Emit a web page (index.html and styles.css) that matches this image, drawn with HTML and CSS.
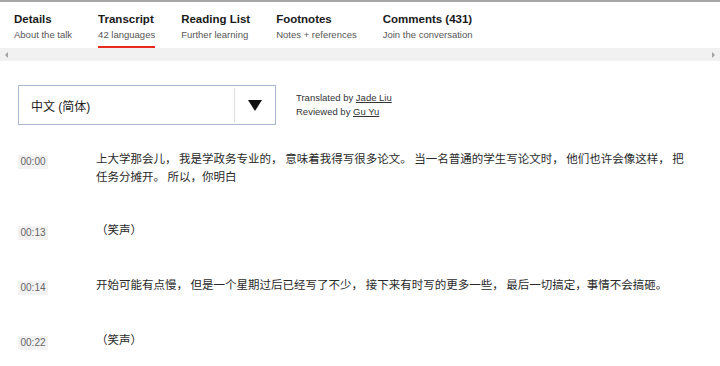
FILE: index.html
```html
<!DOCTYPE html>
<html lang="zh-CN">
<head>
    <meta charset="UTF-8">
    <meta name="viewport" content="width=device-width, initial-scale=1.0">
    <title>Transcript</title>
    <link rel="stylesheet" href="styles.css">
</head>
<body>
    <nav class="tabs">
        <div class="tab-list">
            <a class="tab" href="#details">
                <span class="tab-title">Details</span>
                <span class="tab-sub">About the talk</span>
            </a>
            <a class="tab active" href="#transcript">
                <span class="tab-title">Transcript</span>
                <span class="tab-sub">42 languages</span>
            </a>
            <a class="tab" href="#reading">
                <span class="tab-title">Reading List</span>
                <span class="tab-sub">Further learning</span>
            </a>
            <a class="tab" href="#footnotes">
                <span class="tab-title">Footnotes</span>
                <span class="tab-sub">Notes + references</span>
            </a>
            <a class="tab" href="#comments">
                <span class="tab-title">Comments (431)</span>
                <span class="tab-sub">Join the conversation</span>
            </a>
        </div>
        <div class="fake-scroll">
            <span class="arrow arrow-left"></span>
            <span class="arrow arrow-right"></span>
        </div>
    </nav>

    <main class="content">
        <div class="lang-row">
            <div class="lang-select">
                <span class="lang-name">中文 (简体)</span>
                <span class="lang-toggle"><span class="caret"></span></span>
            </div>
            <div class="credits">
                <div>Translated by <a href="#">Jade Liu</a></div>
                <div>Reviewed by <a href="#">Gu Yu</a></div>
            </div>
        </div>

        <div class="transcript">
            <div class="para">
                <span class="stamp">00:00</span>
                <p class="para-text">上大学那会儿， 我是学政务专业的， 意味着我得写很多论文。 当一名普通的学生写论文时， 他们也许会像这样， 把任务分摊开。 所以，你明白</p>
            </div>
            <div class="para">
                <span class="stamp">00:13</span>
                <p class="para-text">（笑声）</p>
            </div>
            <div class="para">
                <span class="stamp">00:14</span>
                <p class="para-text">开始可能有点慢， 但是一个星期过后已经写了不少， 接下来有时写的更多一些， 最后一切搞定，事情不会搞砸。</p>
            </div>
            <div class="para">
                <span class="stamp">00:22</span>
                <p class="para-text">（笑声）</p>
            </div>
        </div>
    </main>
</body>
</html>
```

FILE: styles.css
```css
body {
    margin: 0;
    font-family: "Liberation Sans", Arial, "Noto Sans CJK SC", sans-serif;
    color: #333;
    background: #fff;
    border-top: 2px solid #a6a6a6;
}
.tabs {
    background: #fff;
}
.tab-list {
    display: flex;
    padding: 9px 0 0 14px;
}
.tab {
    display: flex;
    flex-direction: column;
    margin-right: 26px;
    padding-bottom: 4px;
    border-bottom: 2px solid transparent;
    text-decoration: none;
}
.tab.active {
    border-bottom-color: #e62b1e;
}
.tab-title {
    font-size: 11.5px;
    font-weight: bold;
    color: #1a1a1a;
    line-height: 16px;
}
.tab-sub {
    font-size: 9.5px;
    color: #555;
    line-height: 14px;
    margin-top: 1px;
}
.fake-scroll {
    height: 13px;
    background: #f1f1f1;
    display: flex;
    justify-content: space-between;
    align-items: center;
    padding: 0 5px;
}
.arrow {
    width: 0;
    height: 0;
    border-top: 3px solid transparent;
    border-bottom: 3px solid transparent;
}
.arrow-left {
    border-right: 3px solid #a3a3a3;
}
.arrow-right {
    border-left: 3px solid #a3a3a3;
}
.content {
    padding: 24px 18px 0 18px;
}
.lang-row {
    display: flex;
    align-items: center;
}
.lang-select {
    width: 256px;
    height: 38px;
    border: 1px solid #a9b7cf;
    display: flex;
    align-items: center;
}
.lang-name {
    flex: 1;
    padding-left: 12px;
    font-size: 12px;
    color: #222;
    font-family: "Liberation Sans", "Noto Sans CJK SC", sans-serif;
}
.lang-toggle {
    width: 40px;
    height: 34px;
    border-left: 1px solid #ddd;
    display: flex;
    align-items: center;
    justify-content: center;
}
.caret {
    width: 0;
    height: 0;
    border-left: 7px solid transparent;
    border-right: 7px solid transparent;
    border-top: 11px solid #111;
}
.credits {
    margin-left: 20px;
    font-size: 9.5px;
    line-height: 14px;
    color: #333;
}
.credits a {
    color: #333;
}
.transcript {
    margin-top: 24px;
}
.para {
    display: flex;
    align-items: flex-start;
    margin-bottom: 35px;
}
.stamp {
    width: 30px;
    margin-top: 6px;
    padding: 1px 0;
    line-height: 12px;
    background: #f2f2f2;
    font-size: 10px;
    color: #666;
    text-align: center;
}
.para-text {
    margin: 0 0 0 48px;
    font-family: "Noto Sans CJK SC", sans-serif;
    font-size: 11.5px;
    line-height: 18px;
    color: #2a2a2a;
    flex: 1;
    padding-right: 12px;
}
```
